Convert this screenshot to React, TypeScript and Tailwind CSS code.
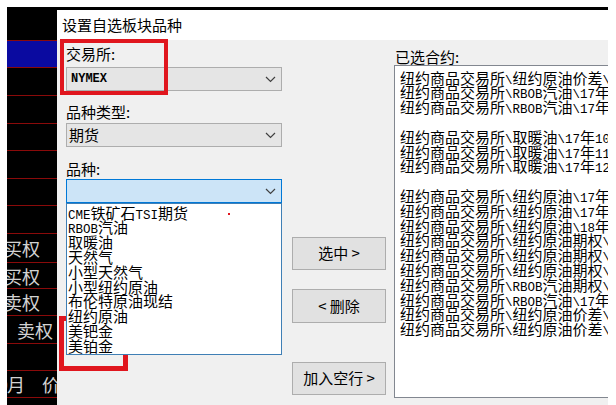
import React from "react";

function Mixed({ text }: { text: string }) {
  const parts = text.split(/([\x20-\x7E]+)/).filter((p) => p.length > 0);
  return (
    <>
      {parts.map((p, i) =>
        /^[\x20-\x7E]+$/.test(p) ? (
          <span key={i} className="font-['Liberation_Mono',monospace] text-[12.5px]">
            {p}
          </span>
        ) : (
          <span key={i}>{p}</span>
        )
      )}
    </>
  );
}

function Chevron() {
  return (
    <svg width="11" height="7" viewBox="0 0 11 7" className="shrink-0">
      <path d="M1 1 L5.5 5.5 L10 1" fill="none" stroke="#404040" strokeWidth="1.2" />
    </svg>
  );
}

const rowText = "flex h-full items-center justify-end whitespace-nowrap";

const leftRows: { h: string; blue?: boolean; content?: React.ReactNode }[] = [
  { h: "h-[33px]" },
  { h: "h-[27px]", blue: true },
  { h: "h-[28px]" },
  { h: "h-[28px]" },
  { h: "h-[27px]" },
  { h: "h-[28px]" },
  { h: "h-[27px]" },
  { h: "h-[28px]" },
  { h: "h-[29px]", content: <div className={`${rowText} pr-[17px]`}>买权</div> },
  { h: "h-[26px]", content: <div className={`${rowText} pr-[17px]`}>买权</div> },
  { h: "h-[27px]", content: <div className={`${rowText} pr-[17px]`}>卖权</div> },
  { h: "h-[28px]", content: <div className={`${rowText} pr-[4px]`}>卖权</div> },
  { h: "h-[27px]" },
  {
    h: "h-[27px]",
    content: (
      <div className="flex h-full items-center whitespace-nowrap">
        <span className="-ml-[9px] w-[9px]">9</span>
        <span>月</span>
        <span className="ml-[17px]">价格</span>
      </div>
    ),
  },
  { h: "h-[20px]" },
];

const dropItems = [
  "CME铁矿石TSI期货",
  "RBOB汽油",
  "取暖油",
  "天然气",
  "小型天然气",
  "小型纽约原油",
  "布伦特原油现结",
  "纽约原油",
  "美钯金",
  "美铂金",
];

const selected = [
  "纽约商品交易所\\纽约原油价差\\",
  "纽约商品交易所\\RBOB汽油\\17年",
  "纽约商品交易所\\RBOB汽油\\17年",
  "",
  "纽约商品交易所\\取暖油\\17年10",
  "纽约商品交易所\\取暖油\\17年11",
  "纽约商品交易所\\取暖油\\17年12",
  "",
  "纽约商品交易所\\纽约原油\\17年",
  "纽约商品交易所\\纽约原油\\17年",
  "纽约商品交易所\\纽约原油\\18年",
  "纽约商品交易所\\纽约原油期权\\",
  "纽约商品交易所\\纽约原油期权\\",
  "纽约商品交易所\\纽约原油期权\\",
  "纽约商品交易所\\RBOB汽油期权\\",
  "纽约商品交易所\\RBOB汽油\\17年",
  "纽约商品交易所\\纽约原油价差\\",
  "纽约商品交易所\\纽约原油价差\\",
];

export default function App() {
  return (
    <div className="relative h-[405px] w-[616px] overflow-hidden bg-white font-['Noto_Sans_CJK_SC',sans-serif] text-black">
      <div className="ml-[7px] mt-[7px] flex h-[398px] w-[601px] bg-black">
        {/* left quote panel */}
        <div className="flex w-[50px] shrink-0 flex-col overflow-hidden text-[18px] leading-none text-[#d2d2d2]">
          {leftRows.map((r, i) => (
            <div
              key={i}
              className={`${r.h} shrink-0 overflow-hidden ${i > 0 ? "border-t border-[#8a0a0a]" : ""} ${
                r.blue ? "bg-[#0a0aa0]" : ""
              }`}
            >
              {r.content}
            </div>
          ))}
        </div>

        {/* dialog */}
        <div className="mt-[3px] flex h-[395px] w-[551px] shrink-0 flex-col overflow-hidden">
          <div className="flex h-[30px] shrink-0 items-center bg-white pl-[5px] text-[15px]">
            设置自选板块品种
          </div>
          <div className="flex flex-1 bg-[#f0f0f0]">
            {/* left column */}
            <div className="ml-[9px] flex w-[216px] shrink-0 flex-col pt-[4px]">
              <div className="h-[20px] text-[15px] leading-[20px]">交易所:</div>
              <div className="mt-[3px] flex h-[24px] items-center justify-between border border-[#adadad] bg-[#e5e5e5] pl-[4px] pr-[5px]">
                <span className="font-['Liberation_Mono',monospace] text-[12px] font-bold">NYMEX</span>
                <Chevron />
              </div>
              <div className="mt-[11px] h-[20px] text-[15px] leading-[20px]">品种类型:</div>
              <div className="mt-[1px] flex h-[24px] items-center justify-between border border-[#adadad] bg-[#e5e5e5] pl-[2px] pr-[5px]">
                <span className="text-[15px]">期货</span>
                <Chevron />
              </div>
              <div className="mt-[12px] h-[20px] text-[15px] leading-[20px]">品种:</div>
              <div className="relative">
                <div className="flex h-[24px] items-center justify-end border border-[#0078d7] bg-[#cce4f7] pr-[5px]">
                  <Chevron />
                </div>
                <div className="absolute left-0 top-full z-10 h-[152px] w-[216px] border border-[#3f7fb5] bg-white pl-[1px] pt-[1.6px]">
                  {dropItems.map((t, i) => (
                    <div key={i} className="h-[14.8px] whitespace-nowrap text-[15px] leading-[14.8px]">
                      <Mixed text={t} />
                    </div>
                  ))}
                  <div className="absolute left-[161px] top-[9px] h-[2px] w-[2px] bg-[#e0161e]" />
                </div>
              </div>
            </div>

            {/* middle buttons */}
            <div className="ml-[10px] flex w-[94px] shrink-0 flex-col pt-[197px]">
              <div className="flex h-[33px] items-center justify-center border border-[#adadad] bg-[#e1e1e1] text-[15px]">
                选中 &gt;
              </div>
              <div className="mt-[19px] flex h-[34px] items-center justify-center border border-[#adadad] bg-[#e1e1e1] text-[15px]">
                &lt; 删除
              </div>
              <div className="mt-[39px] flex h-[33px] items-center justify-center border border-[#adadad] bg-[#e1e1e1] text-[15px]">
                加入空行 &gt;
              </div>
            </div>

            {/* right column */}
            <div className="ml-[8px] flex w-[240px] shrink-0 flex-col pt-[9px]">
              <div className="h-[16px] pl-[1px] text-[15px] leading-[16px]">已选合约:</div>
              <div className="h-[333px] w-[240px] border border-[#828790] bg-white pl-[5px] pt-[4.6px]">
                {selected.map((t, i) => (
                  <div key={i} className="h-[14.8px] whitespace-nowrap text-[15px] leading-[14.8px]">
                    <Mixed text={t} />
                  </div>
                ))}
              </div>
            </div>
          </div>
        </div>
      </div>

      {/* red annotation rectangles */}
      <div className="absolute left-[60px] top-[39px] h-[56px] w-[108px] border-4 border-[#e0161e]" />
      <div className="absolute left-[59px] top-[316px] h-[55px] w-[69px] border-[5px] border-[#e0161e]" />
    </div>
  );
}
